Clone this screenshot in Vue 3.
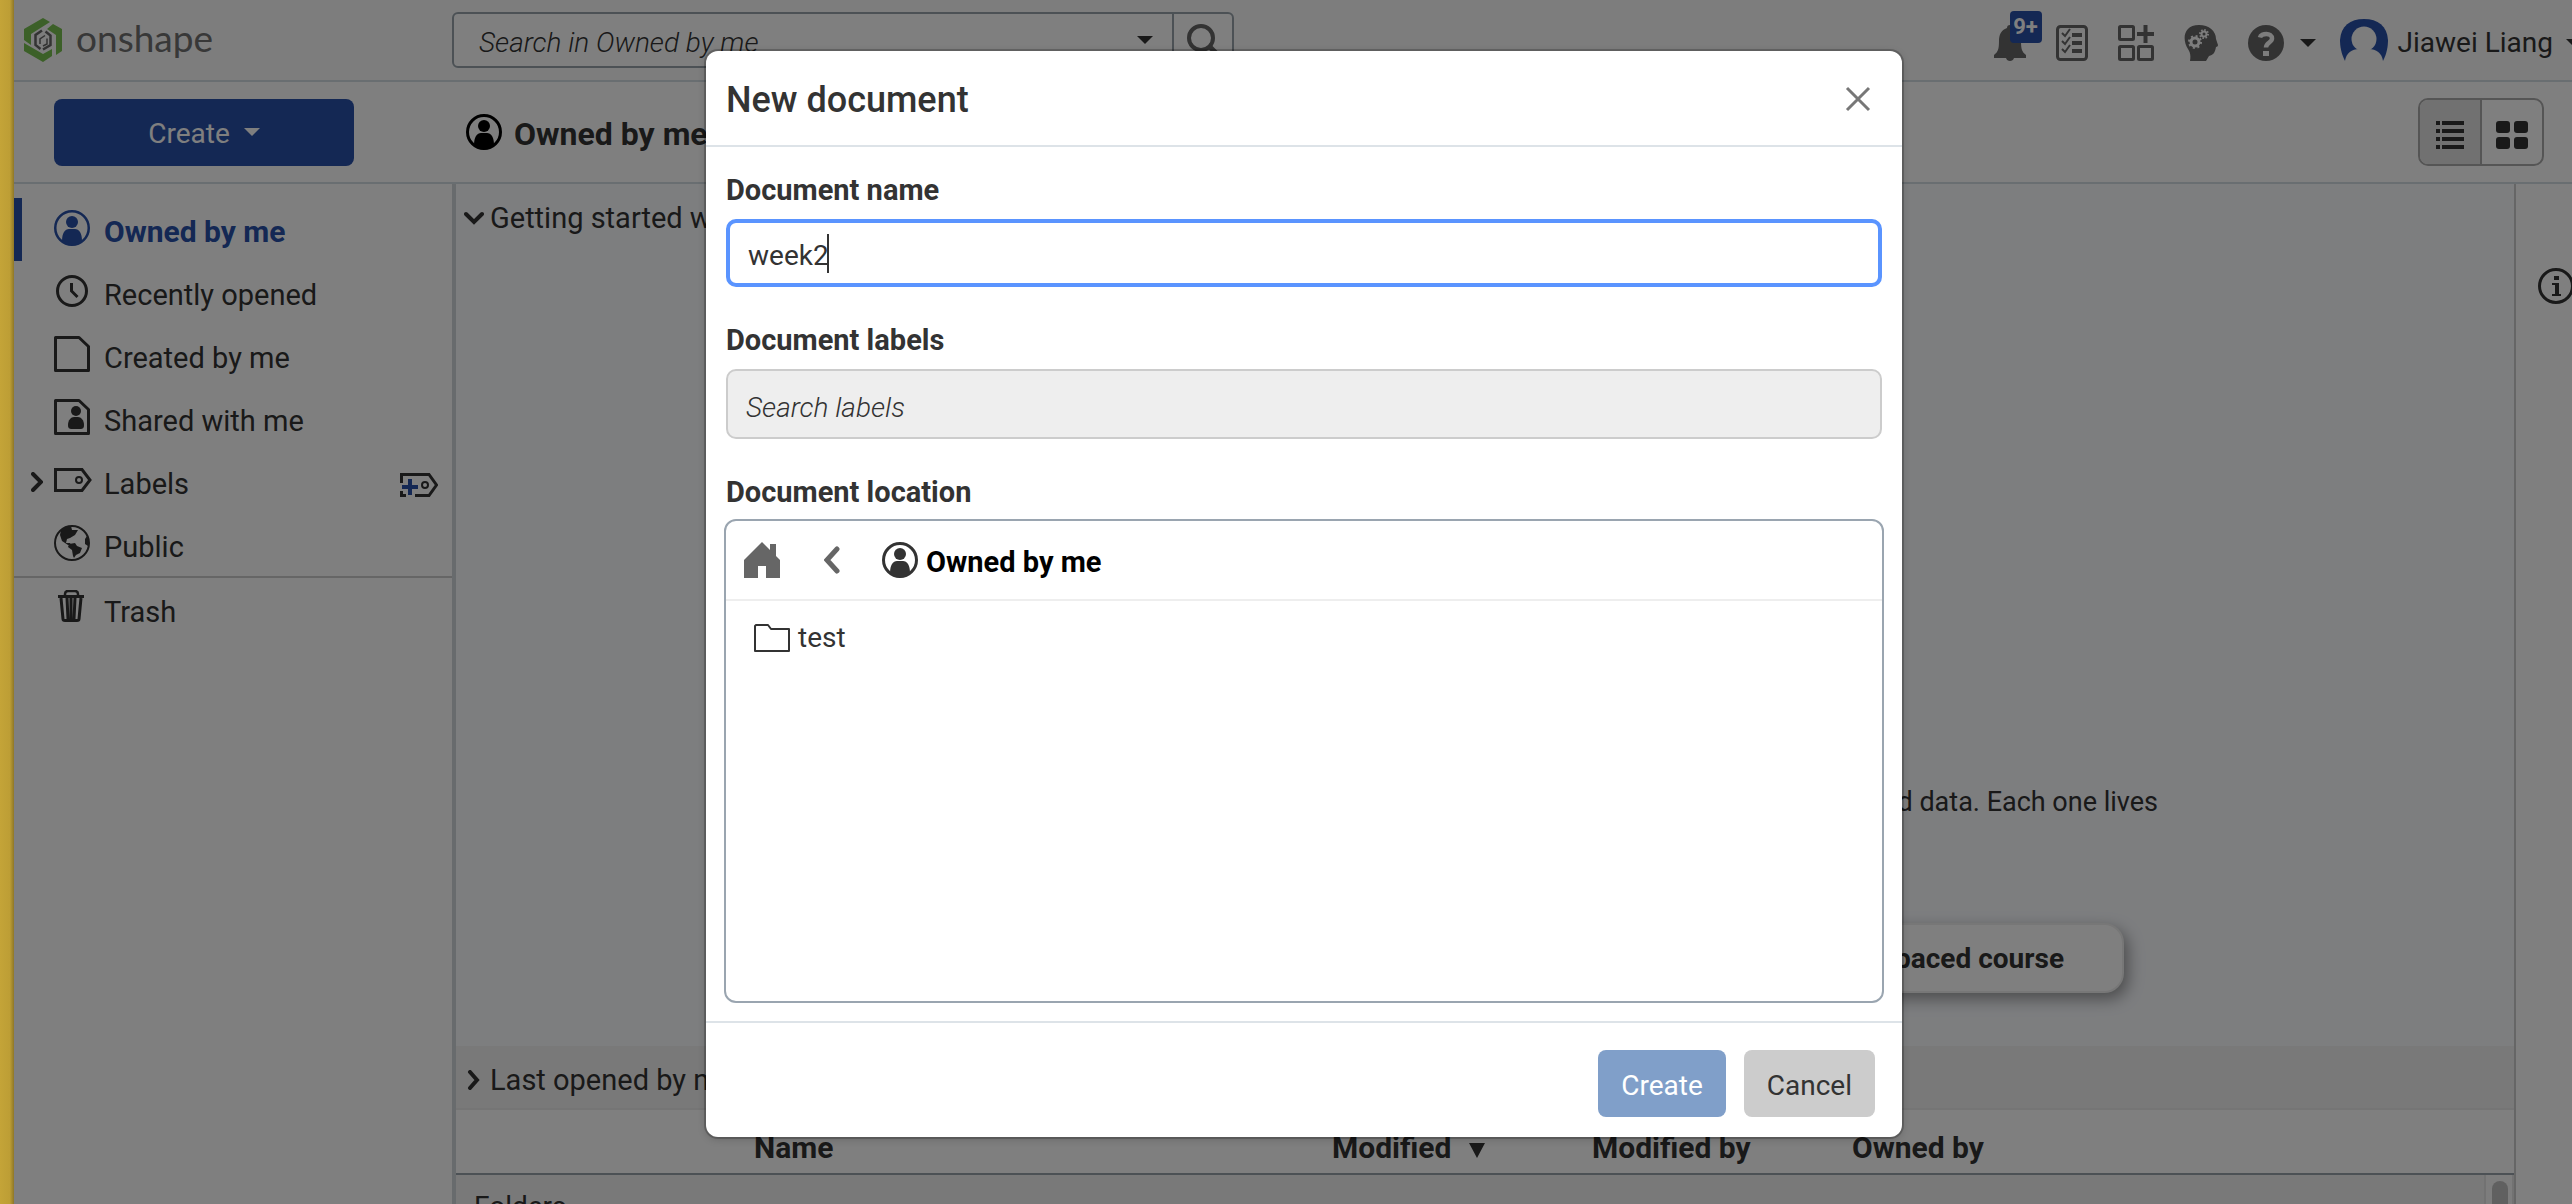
<script setup>
import { ref } from 'vue'

const documentName = ref('week2')
const labels = ref('')
const query = ref('')

const navItems = [
  { id: 'owned', text: 'Owned by me', active: true },
  { id: 'recent', text: 'Recently opened' },
  { id: 'created', text: 'Created by me' },
  { id: 'shared', text: 'Shared with me' },
  { id: 'labels', text: 'Labels' },
  { id: 'public', text: 'Public' },
  { id: 'trash', text: 'Trash', separated: true },
]
</script>

<template>
  <div class="root">
    <div class="strip"></div>
    <div class="app">
      <header class="topbar">
        <a class="brand" href="#" aria-label="onshape">
          <svg width="38" height="44" viewBox="0 0 38 44">
            <g fill="#78c050">
              <path d="M19 0 26 4 7 16v11L0 22V11z" />
              <path d="M29 6 38 11v22l-6 4V17l-9-6z" />
              <path d="M0 25l19 11 9-5v7l-9 6L0 33z" />
            </g>
            <path d="M18 12.500 11.500 17v10l5 4M21.500 13.500l5 4v9.500l-7.500 4.500" fill="none" stroke="#666" stroke-width="2.500" />
            <path d="M21 17.500l-5 3.500v5M23 20.500v5.500l-4 2" fill="none" stroke="#666" stroke-width="1.500" />
          </svg>
          <span>onshape</span>
        </a>
        <form class="search" @submit.prevent>
          <input v-model="query" type="text" placeholder="Search in Owned by me" aria-label="Search in Owned by me" />
          <button class="search-scope" type="button" aria-label="Search scope"><i class="caret"></i></button>
          <button class="search-go" type="submit" aria-label="Search">
            <svg width="34" height="34" viewBox="0 0 34 34" fill="none" stroke="#666" stroke-width="4">
              <circle cx="15" cy="14" r="12" /><path d="M23 22l9 9" stroke-width="5" />
            </svg>
          </button>
        </form>
        <div class="tools">
          <button class="bell" type="button" aria-label="Notifications">
            <svg width="32" height="36" viewBox="0 0 32 36" fill="#666">
              <path d="M16 0c2 0 3 1 3 3 6 2 8 7 8 13 0 8 1 11 5 14v3H20c-1 4-7 4-8 0H0v-3c4-3 5-6 5-14C5 10 7 5 13 3c0-2 1-3 3-3z" />
            </svg>
            <span class="badge">9+</span>
          </button>
          <button class="tasks" type="button" aria-label="Action items">
            <svg width="32" height="36" viewBox="0 0 32 36" fill="none" stroke="#666">
              <rect x="1.500" y="1.500" width="29" height="33" rx="3" stroke-width="3" />
              <path d="M16 10h10M16 18h10M16 26h10" stroke-width="4" />
              <path d="M6 8l3 3 5-7M6 16l3 3 5-7M6 24l3 3 5-7" stroke-width="2" />
            </svg>
          </button>
          <button class="apps" type="button" aria-label="App store">
            <svg width="36" height="36" viewBox="0 0 36 36" fill="none" stroke="#666" stroke-width="3">
              <rect x="1.500" y="1.500" width="14" height="13" rx="1" />
              <rect x="1.500" y="21.500" width="14" height="13" rx="1" />
              <rect x="20.500" y="21.500" width="14" height="13" rx="1" />
              <path d="M27.500 0v18M19 9h17" stroke-width="4" />
            </svg>
          </button>
          <button class="learn" type="button" aria-label="Learning center">
            <svg width="34" height="36" viewBox="0 0 34 36">
              <path d="M6 36c1-6 0-9-2-12C-2 15-1 0 15 0c10 0 17 6 17 14l2 6c0 1-1 2-2 2-1 6-3 8-7 9l-3 5z" fill="#666" />
              <g fill="none" stroke="#fafafa">
                <circle cx="11" cy="17" r="4" stroke-width="3" />
                <circle cx="11" cy="17" r="6" stroke-width="2" stroke-dasharray="2 2.700" />
                <circle cx="20" cy="9" r="2.500" stroke-width="2" />
                <circle cx="20" cy="9" r="4" stroke-width="2" stroke-dasharray="1.500 1.600" />
              </g>
            </svg>
          </button>
          <button class="help" type="button" aria-label="Help">
            <svg width="36" height="36" viewBox="0 0 36 36">
              <circle cx="18" cy="18" r="18" fill="#666" />
              <path d="M12 12.500C13 8 24 7 24 13.500c0 4-6 4-6 9" fill="none" stroke="#fafafa" stroke-width="4.500" />
              <rect x="15" y="26" width="6" height="5" fill="#fafafa" />
            </svg>
            <i class="caret"></i>
          </button>
          <button class="user" type="button">
            <svg width="48" height="48" viewBox="0 0 48 48">
              <path d="M5 42C1 34 0 27 0 21 1 7 10 0 24 0s23 7 24 21c0 6-1 13-5 21z" fill="#2850a8" />
              <circle cx="24" cy="20" r="12.500" fill="#fafafa" />
              <path d="M5 42c1-8 7-12 14-12h10c7 0 13 4 14 12-6 8-32 8-38 0z" fill="#fafafa" />
            </svg>
            <span>Jiawei Liang</span>
            <i class="caret"></i>
          </button>
        </div>
      </header>

      <div class="subbar">
        <div class="create-cell">
          <button class="create" type="button"><span>Create</span> <i class="caret"></i></button>
        </div>
        <h1 class="page-title">
          <svg width="36" height="36" viewBox="0 0 36 36">
            <circle cx="18" cy="18" r="16.500" fill="none" stroke="#000" stroke-width="3" />
            <circle cx="18" cy="12" r="6" />
            <path d="M8 31c0-8 3-12 7-12h6c4 0 7 4 7 12-5 6-15 6-20 0z" />
          </svg>
          <span>Owned by me</span>
        </h1>
        <div class="views">
          <button class="on" type="button" aria-label="List view">
            <svg width="28" height="28" viewBox="0 0 28 28" fill="#333">
              <path d="M0 0h4v4H0zM6 0h22v4H6zM0 8h4v4H0zM6 8h22v4H6zM0 16h4v4H0zM6 16h22v4H6zM0 24h4v4H0zM6 24h22v4H6z" />
            </svg>
          </button>
          <button type="button" aria-label="Tile view">
            <svg width="32" height="28" viewBox="0 0 32 28" fill="#333">
              <rect width="14" height="12" rx="3" /><rect x="18" width="14" height="12" rx="3" />
              <rect y="16" width="14" height="12" rx="3" /><rect x="18" y="16" width="14" height="12" rx="3" />
            </svg>
          </button>
        </div>
      </div>

      <div class="columns">
        <nav class="sidebar">
          <div
            v-for="item in navItems"
            :key="item.id"
            class="nav-row"
            :class="{ active: item.active, separated: item.separated }"
          >
            <svg v-if="item.id === 'labels'" class="expand" width="12" height="20" viewBox="0 0 12 20" fill="none" stroke="#333" stroke-width="4" stroke-linecap="round">
              <path d="M2 2l8 8-8 8" />
            </svg>
            <a href="#">
              <svg width="38" height="36" viewBox="0 0 38 36">
                <g v-if="item.id === 'owned'" fill="#2850a8">
                  <circle cx="18" cy="18" r="16.750" fill="none" stroke="#2850a8" stroke-width="2.500" />
                  <circle cx="18" cy="12" r="6" />
                  <path d="M8 31c0-8 3-12 7-12h6c4 0 7 4 7 12-5 6-15 6-20 0z" />
                </g>
                <g v-else-if="item.id === 'recent'" fill="none" stroke="#333">
                  <circle cx="18" cy="18" r="14.500" stroke-width="3" />
                  <path d="M17.500 10v8l6 6" stroke-width="3" />
                </g>
                <path v-else-if="item.id === 'created'" d="M2.500 1.500H25l9.500 9v24h-33v-33z" fill="none" stroke="#333" stroke-width="3" stroke-linejoin="round" />
                <g v-else-if="item.id === 'shared'" fill="#333">
                  <path d="M2.500 1.500H25l9.500 9v24h-33v-33z" fill="none" stroke="#333" stroke-width="3" stroke-linejoin="round" />
                  <circle cx="22" cy="12" r="5" />
                  <path d="M14 26c0-5 3-8 6-8h4c3 0 6 3 6 8 0 3-1 4-4 4h-8c-3 0-4-1-4-4z" />
                </g>
                <g v-else-if="item.id === 'labels'" fill="none" stroke="#333">
                  <path d="M1.500 7.500H28l8 10.500-8 10.500H1.500z" stroke-width="3" />
                  <circle cx="25" cy="18" r="3" stroke-width="2" />
                </g>
                <g v-else-if="item.id === 'public'" fill="#333">
                  <circle cx="18" cy="18" r="17" fill="none" stroke="#333" stroke-width="2" />
                  <path d="M7 5c4-4 9-4 10-4l1 4 6 0-3 5-5 3-3 1-1 4 4 0 1 2-3 0-6-4-2-6z" />
                  <path d="M15 19l6-1 2 3 5 2-2 5-4 2-2 3-1-2-1-6-4-3z" />
                  <path d="M33 11l2 4v5l-1 1-3-2 0-5z" />
                </g>
                <g v-else fill="none" stroke="#333">
                  <path d="M11 6V4c0-2 1-3 3-3h7c2 0 3 1 3 3v2" stroke-width="2.500" />
                  <path d="M4 6.500h26" stroke-width="3" />
                  <path d="M7 8l2 21c0 1 1 1.500 2 1.500h12c1 0 2-.5 2-1.500l2-21M13 8l1 21M21 8l-1 21M17 8v21" stroke-width="3" />
                </g>
              </svg>
              <span>{{ item.text }}</span>
            </a>
            <button v-if="item.id === 'labels'" class="add-label" type="button" aria-label="Create label">
              <svg width="38" height="24" viewBox="0 0 38 24" fill="none">
                <path d="M1.500 10V1.500H29l7.500 10.500-7.500 10.500H15M6 22.500H1.500V18" stroke="#333" stroke-width="3" />
                <circle cx="25" cy="12" r="3" stroke="#333" stroke-width="2" />
                <path d="M10 6v16M2 14h16" stroke="#2850a8" stroke-width="4" />
              </svg>
            </button>
          </div>
        </nav>

        <main class="content">
          <section class="intro">
            <h2 class="section-title">
              <svg width="20" height="20" viewBox="0 0 20 20" fill="none" stroke="#333" stroke-width="4" stroke-linecap="round"><path d="M2 6l8 8 8-8" /></svg>
              Getting started with Onshape
            </h2>
            <p class="intro-text">Documents hold your parts, assemblies and related data. Each one lives</p>
            <div class="intro-action"><a href="#">Self-paced course</a></div>
          </section>
          <h2 class="section-title last-opened">
            <svg width="20" height="20" viewBox="0 0 20 20" fill="none" stroke="#333" stroke-width="4" stroke-linecap="round"><path d="M6 2l7 8-7 8" /></svg>
            Last opened by me
          </h2>
          <table class="files">
            <thead>
              <tr>
                <th class="pad"></th>
                <th class="name">Name</th>
                <th class="mid">Modified <i class="sort"></i></th>
                <th class="mid">Modified by</th>
                <th>Owned by</th>
              </tr>
            </thead>
          </table>
          <div class="group">
            <span>Folders</span>
            <div class="track"><div class="thumb"></div></div>
          </div>
        </main>

        <aside class="details">
          <button type="button" aria-label="Details">
            <svg width="36" height="36" viewBox="0 0 36 36">
              <circle cx="18" cy="18" r="16.500" fill="none" stroke="#333" stroke-width="3" />
              <path d="M16 8h5v4h-5zM14 15h7v11h2v2h-9v-2h3v-9h-3z" fill="#333" />
            </svg>
          </button>
        </aside>
      </div>

      <div class="overlay">
        <div class="modal" role="dialog" aria-labelledby="dialog-title">
          <div class="modal-head">
            <h2 id="dialog-title">New document</h2>
            <button type="button" aria-label="Close">
              <svg width="26" height="26" viewBox="0 0 26 26" fill="none" stroke="#777" stroke-width="3"><path d="M2 2l22 22M24 2L2 24" /></svg>
            </button>
          </div>
          <div class="modal-body">
            <label for="doc-name">Document name</label>
            <div class="name-field">
              <input id="doc-name" v-model="documentName" type="text" />
              <span class="text-cursor"></span>
            </div>
            <label for="doc-labels">Document labels</label>
            <input id="doc-labels" v-model="labels" class="labels-field" type="text" placeholder="Search labels" />
            <h3>Document location</h3>
            <div class="location">
              <div class="path">
                <button class="home" type="button" aria-label="Home">
                  <svg width="36" height="36" viewBox="0 0 36 36" fill="#666"><path d="M18 0l8 8V2h6v12l4 4v18H22V24h-8v12H0V18z" /></svg>
                </button>
                <button class="back" type="button" aria-label="Back">
                  <svg width="16" height="28" viewBox="0 0 16 28" fill="none" stroke="#666" stroke-width="5" stroke-linecap="round"><path d="M13 3L3 14l10 11" /></svg>
                </button>
                <svg width="36" height="36" viewBox="0 0 36 36" fill="#333">
                  <circle cx="18" cy="18" r="16.500" fill="none" stroke="#333" stroke-width="3" />
                  <circle cx="18" cy="12" r="6" />
                  <path d="M8 31c0-8 3-12 7-12h6c4 0 7 4 7 12-5 6-15 6-20 0z" />
                </svg>
                <strong>Owned by me</strong>
              </div>
              <a class="folder" href="#">
                <svg width="36" height="28" viewBox="0 0 36 28" fill="none" stroke="#333" stroke-width="2" stroke-linejoin="round"><path d="M2 1h12l3 4h18v22H1V2z" /></svg>
                test
              </a>
            </div>
          </div>
          <div class="modal-foot">
            <button class="primary" type="button">Create</button>
            <button class="secondary" type="button">Cancel</button>
          </div>
        </div>
      </div>
    </div>
  </div>
</template>

<style>
body {
  margin: 0;
  overflow: hidden;
}
</style>

<style scoped>
.root {
  display: flex;
  height: 100vh;
  overflow: hidden;
  font-family: Roboto, "Liberation Sans", sans-serif;
  font-size: 28px;
  line-height: 36px;
  color: #333;
}
.root * {
  box-sizing: border-box;
}
button,
input {
  margin: 0;
  padding: 0;
  border: 0;
  background: none;
  font: inherit;
  color: inherit;
  outline: none;
}
a {
  color: inherit;
  text-decoration: none;
}
h1,
h2,
h3,
p {
  margin: 0;
}
svg {
  display: block;
  flex: none;
}
.strip {
  flex: none;
  width: 14px;
  background: linear-gradient(90deg, #c4a438, #bd9e35 70%, #8e7728);
}
.app {
  position: relative;
  flex: none;
  display: flex;
  flex-direction: column;
  width: calc(100% + 8px);
  background: #fff;
}
.caret {
  display: block;
  flex: none;
  width: 16px;
  border: 8px solid transparent;
  border-top-color: #333;
  border-bottom: 0;
}

/* top bar */
.topbar {
  display: flex;
  align-items: center;
  flex: none;
  height: 82px;
  padding-right: 12px;
  border-bottom: 2px solid #d3dce3;
  background: #fafafa;
}
.brand {
  display: flex;
  align-items: center;
  gap: 14px;
  width: 438px;
  padding-left: 10px;
  font-family: Lato, sans-serif;
  font-size: 37px;
  color: #707070;
}
.brand span {
  padding-bottom: 4px;
}
.search {
  display: flex;
  width: 782px;
  height: 56px;
  border: 2px solid #98a3ab;
  border-radius: 6px;
  background: #fff;
}
.search input {
  flex: 1;
  min-width: 0;
  padding: 6px 0 0 25px;
}
input::placeholder {
  color: #333;
  opacity: 1;
  font-style: italic;
  font-weight: 300;
}
.search-scope {
  width: 52px;
  padding-left: 17px;
}
.search-go {
  display: flex;
  justify-content: center;
  padding-top: 10px;
  width: 60px;
  border-left: 2px solid #98a3ab;
}
.tools {
  display: flex;
  align-items: center;
  gap: 30px;
  margin-left: auto;
  padding-top: 6px;
}
.bell {
  position: relative;
}
.badge {
  position: absolute;
  left: 16px;
  top: -14px;
  width: 32px;
  height: 32px;
  border-radius: 4px;
  background: #2850a8;
  color: #fff;
  font-size: 22px;
  font-weight: 700;
  line-height: 32px;
  text-align: center;
}
.help {
  display: flex;
  align-items: center;
  gap: 16px;
  margin-right: -6px;
}
.user {
  display: flex;
  align-items: center;
  gap: 10px;
}
.user .caret {
  margin-left: 3px;
}

/* action bar */
.subbar {
  display: flex;
  align-items: center;
  flex: none;
  height: 102px;
  padding-right: 50px;
  border-bottom: 2px solid #d3dce3;
}
.create-cell {
  width: 452px;
  padding-left: 40px;
}
.create {
  display: flex;
  align-items: center;
  justify-content: center;
  gap: 14px;
  width: 300px;
  height: 67px;
  border-radius: 8px;
  background: #2850a8;
  color: #fff;
}
.create span {
  padding-top: 4px;
}
.create .caret {
  border-top-color: #fff;
}
.page-title {
  display: flex;
  align-items: center;
  gap: 12px;
  font-size: 32px;
  color: #333;
}
.page-title span {
  padding-top: 4px;
}
.views {
  display: flex;
  width: 126px;
  height: 68px;
  margin-left: auto;
  border: 2px solid #aaa;
  border-radius: 10px;
  overflow: hidden;
}
.views button {
  display: flex;
  flex: 1;
  align-items: center;
  justify-content: center;
  padding-top: 6px;
}
.views .on {
  border-right: 2px solid #aaa;
  background: #e2e2e2;
}

/* columns */
.columns {
  display: flex;
  flex: 1;
  min-height: 0;
}
.sidebar {
  flex: none;
  width: 442px;
  padding-top: 14px;
  border-right: 4px solid #d0d6db;
}
.nav-row {
  position: relative;
  display: flex;
  align-items: center;
  height: 63px;
  padding: 0 14px 0 40px;
  font-size: 29px;
}
.nav-row a {
  display: flex;
  flex: 1;
  align-items: center;
  gap: 12px;
}
.nav-row a svg {
  margin-bottom: 4px;
}
.nav-row a span {
  padding-top: 4px;
}
.nav-row.active {
  border-left: 8px solid #2850a8;
  padding-left: 32px;
  color: #2850a8;
  font-size: 30px;
  font-weight: 700;
}
.nav-row.separated {
  height: 65px;
  border-top: 2px solid #ccc;
}
.expand {
  position: absolute;
  left: 17px;
  top: 22px;
}
.add-label {
  padding-top: 6px;
}
.content {
  display: flex;
  flex: 1;
  flex-direction: column;
  min-width: 0;
}
.intro {
  flex: none;
  height: 862px;
  background: #fafcff;
}
.section-title {
  display: flex;
  align-items: center;
  gap: 6px;
  padding-left: 8px;
  font-size: 29px;
  font-weight: 400;
}
.intro .section-title {
  padding-top: 16px;
}
.intro-text {
  margin-top: 548px;
  padding-right: 356px;
  font-size: 27px;
  text-align: right;
}
.intro-action {
  display: flex;
  justify-content: flex-end;
  margin-top: 103px;
  padding-right: 390px;
}
.intro-action a {
  padding: 16px 58px 14px;
  border: 2px solid #eee;
  border-radius: 20px;
  background: #fff;
  box-shadow: 4px 6px 16px rgba(0, 0, 0, 0.4);
  font-weight: 700;
}
.last-opened {
  flex: none;
  height: 64px;
  padding-top: 5px;
  border-bottom: 2px solid #eaeaea;
  background: #f3f3f3;
}
.files {
  flex: none;
  width: 100%;
  table-layout: fixed;
  border-collapse: collapse;
}
.files th {
  height: 64px;
  padding: 12px 0 0;
  border-bottom: 2px solid #98a3ab;
  font-size: 30px;
  text-align: left;
}
.files .pad {
  width: 298px;
}
.files .name {
  width: 578px;
}
.files .mid {
  width: 260px;
}
.sort {
  display: inline-block;
  margin-left: 10px;
  border: 8px solid transparent;
  border-top: 15px solid #333;
  border-bottom: 0;
}
.group {
  display: flex;
  flex: 1;
  justify-content: space-between;
  min-height: 0;
  background: #f3f3f3;
  overflow: hidden;
}
.group span {
  padding: 14px 0 0 18px;
}
.track {
  width: 30px;
  padding: 6px 6px 0;
  border-left: 2px solid #e4e4e4;
  border-right: 2px solid #e4e4e4;
  background: #fafafa;
}
.thumb {
  width: 16px;
  height: 120px;
  border-radius: 8px;
  background: #c0c0c0;
}
.details {
  flex: none;
  width: 80px;
  padding: 84px 0 0 22px;
  border-left: 2px solid #ccc;
}

/* dialog */
.overlay {
  position: absolute;
  inset: 0;
  display: flex;
  align-items: flex-start;
  justify-content: center;
  padding-top: 51px;
  background: rgba(0, 0, 0, 0.5);
}
.modal {
  width: 1196px;
  border-radius: 12px;
  background: #fff;
  box-shadow: 0 0 0 2px rgba(0, 0, 0, 0.2), 0 2px 8px rgba(0, 0, 0, 0.2);
}
.modal-head {
  display: flex;
  align-items: center;
  justify-content: space-between;
  height: 96px;
  padding: 2px 31px 0 20px;
  border-bottom: 2px solid #dde3e8;
}
.modal-head h2 {
  padding-top: 2px;
  font-size: 36px;
  font-weight: 500;
}
.modal-body {
  display: flex;
  flex-direction: column;
  padding: 25px 20px 18px;
}
.modal-body label,
.modal-body h3 {
  margin-bottom: 11px;
  font-size: 29px;
  line-height: 36px;
  font-weight: 700;
}
.modal-body h3 {
  margin-bottom: 9px;
}
.name-field {
  position: relative;
  margin-bottom: 35px;
}
.name-field input {
  display: block;
  width: 100%;
  height: 68px;
  padding: 4px 18px 0;
  border: 4px solid #5a94ff;
  border-radius: 10px;
}
.text-cursor {
  position: absolute;
  left: 101px;
  top: 15px;
  width: 2px;
  height: 39px;
  background: #333;
}
.labels-field {
  height: 70px;
  margin-bottom: 35px;
  padding: 6px 18px 0;
  border: 2px solid #ccc;
  border-radius: 10px;
  background: #eee;
}
.location {
  height: 484px;
  margin: 0 -2px;
  border: 2px solid #9aa5b0;
  border-radius: 12px;
}
.path {
  display: flex;
  align-items: center;
  height: 80px;
  padding-left: 18px;
  border-bottom: 2px solid #eee;
}
.path .back {
  margin: 0 42px 0 44px;
}
.path strong {
  margin-left: 8px;
  padding-top: 4px;
  font-size: 29px;
  color: #000;
}
.folder {
  display: flex;
  align-items: center;
  gap: 8px;
  padding: 19px 0 0 28px;
}
.modal-foot {
  display: flex;
  justify-content: flex-end;
  gap: 18px;
  height: 116px;
  padding: 27px 27px 0;
  border-top: 2px solid #dde3e8;
}
.modal-foot button {
  height: 67px;
  padding: 4px 23px 0;
  border-radius: 8px;
}
.primary {
  background: #809fc9;
  color: #fff;
}
.secondary {
  background: #ccc;
}
</style>
